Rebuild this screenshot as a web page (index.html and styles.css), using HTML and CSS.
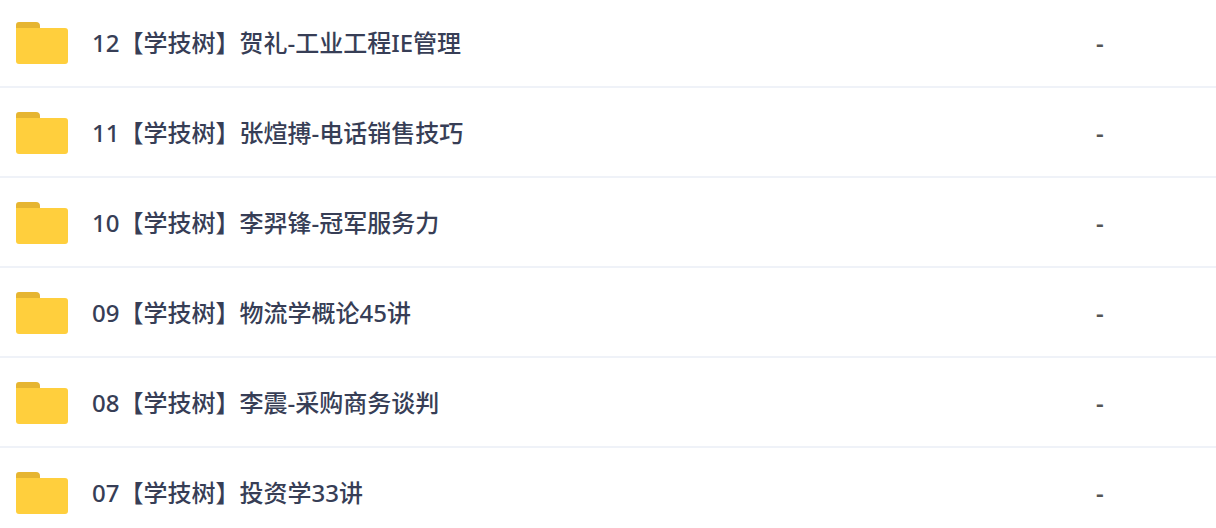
FILE: index.html
```html
<!DOCTYPE html>
<html lang="zh-CN">
<head>
    <meta charset="UTF-8">
    <meta name="viewport" content="width=device-width, initial-scale=1.0">
    <title>学技树</title>
    <link rel="stylesheet" href="styles.css">
</head>
<body>
    <svg class="icon-defs" aria-hidden="true">
        <symbol id="folder" viewBox="0 0 52 42">
            <path fill="#e6b531" d="M3 0H20Q24 0 24 4V12H0V3Q0 0 3 0Z"/>
            <path fill="#ffcf3d" d="M0 6H49Q52 6 52 9V39Q52 42 49 42H3Q0 42 0 39Z"/>
        </symbol>
    </svg>

    <table class="file-list">
        <tbody>
            <tr>
                <td class="file-icon"><svg class="folder"><use href="#folder"/></svg></td>
                <td class="file-name"><a href="#">12【学技树】贺礼-工业工程IE管理</a></td>
                <td class="file-size">-</td>
            </tr>
            <tr>
                <td class="file-icon"><svg class="folder"><use href="#folder"/></svg></td>
                <td class="file-name"><a href="#">11【学技树】张煊搏-电话销售技巧</a></td>
                <td class="file-size">-</td>
            </tr>
            <tr>
                <td class="file-icon"><svg class="folder"><use href="#folder"/></svg></td>
                <td class="file-name"><a href="#">10【学技树】李羿锋-冠军服务力</a></td>
                <td class="file-size">-</td>
            </tr>
            <tr>
                <td class="file-icon"><svg class="folder"><use href="#folder"/></svg></td>
                <td class="file-name"><a href="#">09【学技树】物流学概论45讲</a></td>
                <td class="file-size">-</td>
            </tr>
            <tr>
                <td class="file-icon"><svg class="folder"><use href="#folder"/></svg></td>
                <td class="file-name"><a href="#">08【学技树】李震-采购商务谈判</a></td>
                <td class="file-size">-</td>
            </tr>
            <tr>
                <td class="file-icon"><svg class="folder"><use href="#folder"/></svg></td>
                <td class="file-name"><a href="#">07【学技树】投资学33讲</a></td>
                <td class="file-size">-</td>
            </tr>
        </tbody>
    </table>
</body>
</html>
```
FILE: styles.css
```css
* {
    margin: 0;
    padding: 0;
    box-sizing: border-box;
}

body {
    font-family: "Noto Sans", "Noto Sans CJK SC", sans-serif;
    font-size: 24px;
    font-weight: 500;
    line-height: 42px;
    color: #373e56;
    background: #fff;
}

.icon-defs {
    display: none;
}

.file-list {
    width: 100%;
    table-layout: fixed;
    border-collapse: separate;
    border-spacing: 0;
}

.file-list td {
    padding: 24px 0 22px;
    border-bottom: 2px solid #eff2f8;
    vertical-align: top;
}

.file-list tr:first-child td {
    padding-top: 22px;
}

.file-list tr:last-child td {
    padding-bottom: 12px;
    border-bottom: 0;
}

.file-list .file-icon {
    width: 92px;
    padding-left: 16px;
}

.folder {
    display: block;
    width: 52px;
    height: 42px;
}

.file-name {
    overflow: hidden;
    white-space: nowrap;
    text-overflow: ellipsis;
}

.file-name a {
    color: inherit;
    text-decoration: none;
}

.file-name a:hover {
    color: #06a7ff;
}

.file-size {
    width: 120px;
    font-weight: 600;
    color: #555;
}
```
